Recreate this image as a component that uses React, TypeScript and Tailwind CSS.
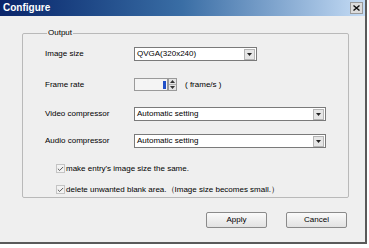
import { Check } from "lucide-react";

const font = { fontFamily: '"Liberation Sans", Arial, sans-serif' };

function Combo({ value, width }: { value: string; width: string }) {
  return (
    <div className={`flex h-[14px] items-center border border-[#7a7a7a] bg-white ${width}`}>
      <span className="flex-1 pl-[2px] text-[8px] leading-none text-black">{value}</span>
      <span className="mr-[1px] flex h-[11px] w-[11px] items-center justify-center border border-[#b5b5b5] bg-[#e6e6e6]">
        <svg width="5" height="3" viewBox="0 0 5 3">
          <path d="M0 0h5L2.5 3z" fill="#222" />
        </svg>
      </span>
    </div>
  );
}

function Row({ label, children, className }: { label: string; children: React.ReactNode; className: string }) {
  return (
    <div className={`flex items-center ${className}`}>
      <span className="w-[89px] text-[8px] leading-none text-black">{label}</span>
      {children}
    </div>
  );
}

function CheckRow({ label, className }: { label: string; className: string }) {
  return (
    <div className={`flex items-center pl-[11px] ${className}`}>
      <span className="flex h-[9px] w-[9px] items-center justify-center border border-[#c4c4c4] bg-[#f2f2f2]">
        <Check size={8} strokeWidth={3} className="text-[#444]" />
      </span>
      <span className="pl-[1px] text-[8px] leading-none text-black">{label}</span>
    </div>
  );
}

function Button({ label }: { label: string }) {
  return (
    <button className="flex h-[16px] w-[61px] items-center justify-center rounded-[2px] border border-[#8a8a8a] bg-gradient-to-b from-[#fafafa] to-[#e2e2e2] text-[8px] leading-none text-black">
      {label}
    </button>
  );
}

export default function App() {
  return (
    <div className="h-[248px] w-[369px] bg-white" style={font}>
      <div className="h-[244px] w-[367px] border-b-2 border-r-2 border-b-[#5a5a5a] border-r-[#5a5a5a] bg-[#efefef]">
        <div className="flex h-[16px] items-center justify-between bg-gradient-to-r from-[#0a246a] via-[#3a6ea5] to-[#c5dcf5] pl-[3px] pr-[2px]">
          <span className="text-[10px] font-bold leading-none text-white">Configure</span>
          <span className="flex h-[12px] w-[13px] items-center justify-center border border-[#9a9a9a] bg-[#dcdcdc]">
            <svg width="7" height="6" viewBox="0 0 7 6">
              <path d="M0.5 0.5L6.5 5.5M6.5 0.5L0.5 5.5" stroke="#111" strokeWidth="1.4" />
            </svg>
          </span>
        </div>

        <fieldset className="ml-[22px] mt-[13px] h-[169px] w-[319px] rounded-[2px] border border-[#b9b9b9] px-[22px]">
          <legend className="ml-[2px] px-[1px] text-[8px] leading-none text-black">Output</legend>
          <Row label="Image size" className="mt-[10px]">
            <Combo value="QVGA(320x240)" width="w-[123px]" />
          </Row>
          <Row label="Frame rate" className="mt-[17px]">
            <div className="flex h-[13px] items-center">
              <div className="flex h-[13px] w-[34px] items-center justify-end border border-[#9a9a9a] bg-[#f4f4f4] pr-[1px]">
                <span className="h-[8px] w-[3px] bg-[#2050c8]" />
              </div>
              <div className="flex h-[13px] w-[9px] flex-col border border-[#9a9a9a] bg-[#e4e4e4]">
                <span className="flex flex-1 items-center justify-center border-b border-[#b0b0b0]">
                  <svg width="5" height="3" viewBox="0 0 5 3"><path d="M0 3h5L2.5 0z" fill="#333" /></svg>
                </span>
                <span className="flex flex-1 items-center justify-center">
                  <svg width="5" height="3" viewBox="0 0 5 3"><path d="M0 0h5L2.5 3z" fill="#333" /></svg>
                </span>
              </div>
              <span className="pl-[8px] text-[8px] leading-none text-black">( frame/s )</span>
            </div>
          </Row>
          <Row label="Video compressor" className="mt-[16px]">
            <Combo value="Automatic setting" width="w-[192px]" />
          </Row>
          <Row label="Audio compressor" className="mt-[13px]">
            <Combo value="Automatic setting" width="w-[192px]" />
          </Row>
          <CheckRow label="make  entry's image size the same." className="mt-[16px]" />
          <CheckRow label="delete unwanted blank area.（Image size becomes small.）" className="mt-[12px]" />
        </fieldset>

        <div className="mt-[14px] flex justify-end gap-[19px] pr-[18px]">
          <Button label="Apply" />
          <Button label="Cancel" />
        </div>
      </div>
    </div>
  );
}
